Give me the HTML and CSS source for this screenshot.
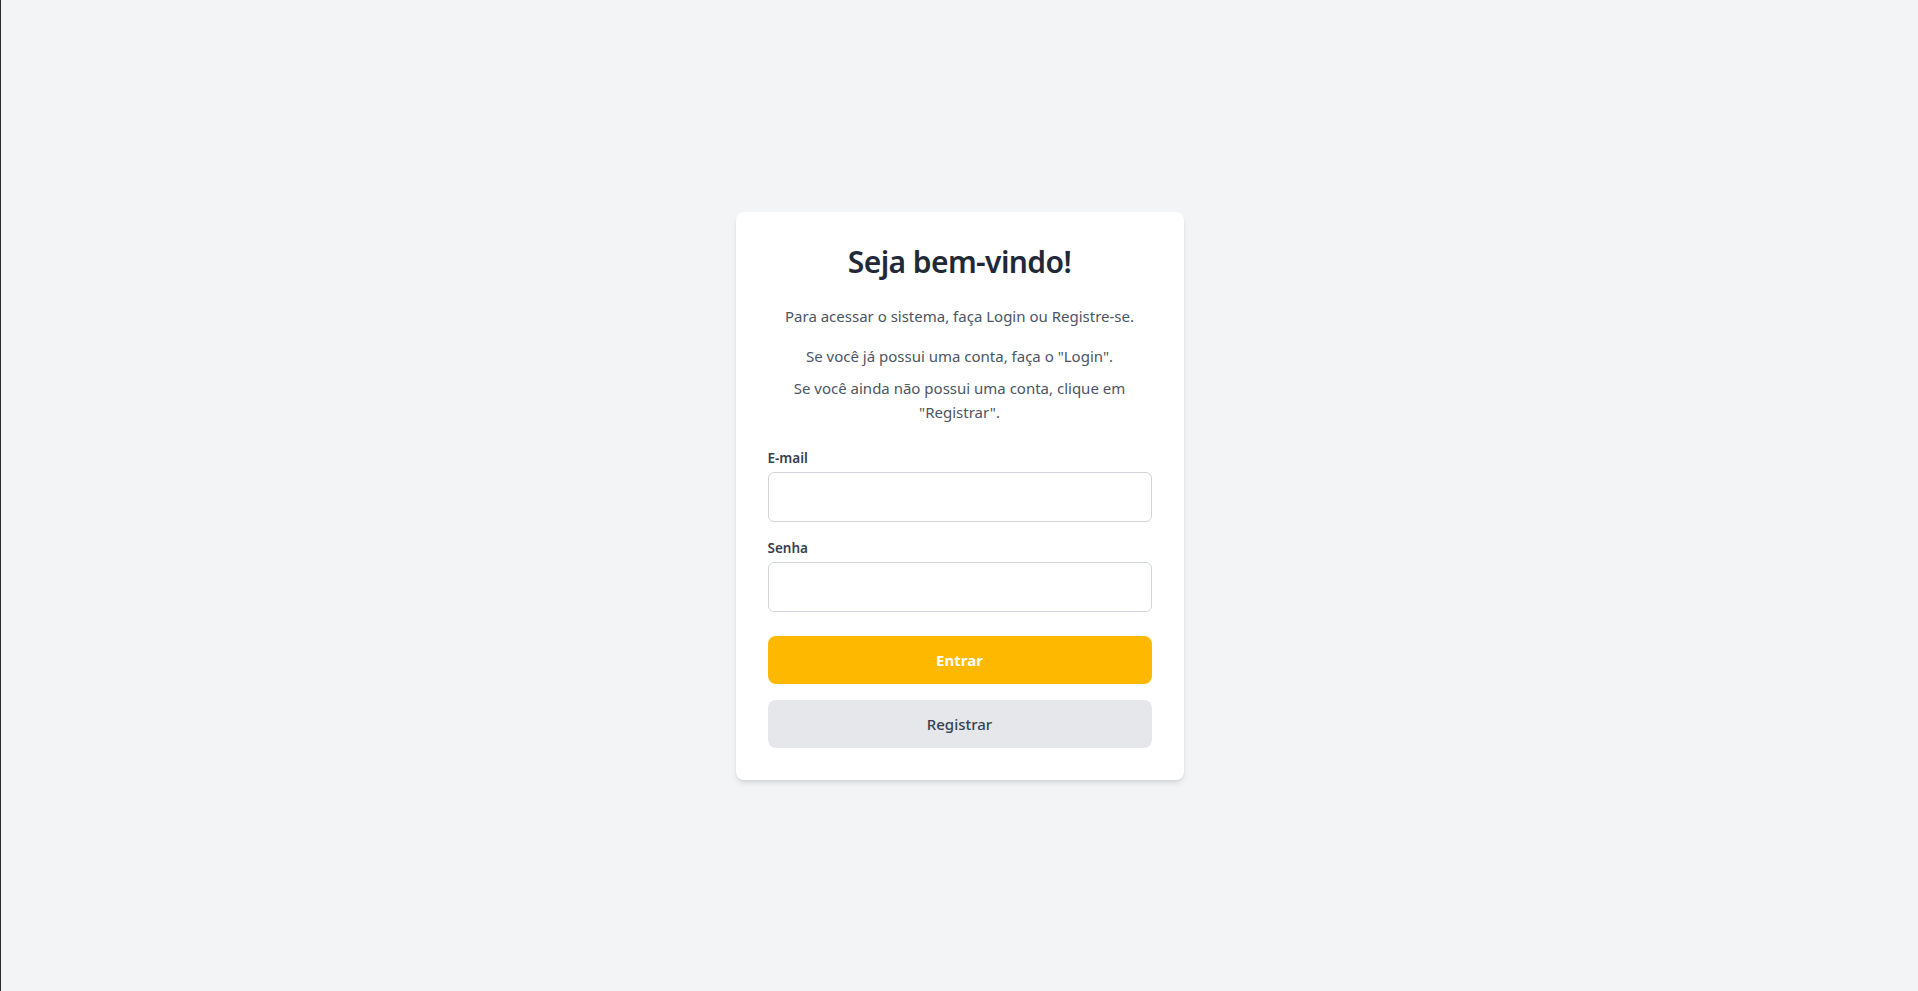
FILE: index.html
```html
<!DOCTYPE html>
<html lang="pt-BR">
<head>
<meta charset="utf-8">
<title>Login</title>
<link rel="stylesheet" href="styles.css">
</head>
<body>
<div class="page">
  <div class="card">
    <h1 class="title">Seja bem-vindo!</h1>
    <p class="intro intro-first">Para acessar o sistema, faça Login ou Registre-se.</p>
    <p class="intro intro-second">Se você já possui uma conta, faça o "Login".</p>
    <p class="intro intro-third">Se você ainda não possui uma conta, clique em "Registrar".</p>
    <form class="form" onsubmit="return false;">
      <div class="field">
        <label class="label" for="email">E-mail</label>
        <input class="input" id="email" type="email">
      </div>
      <div class="field">
        <label class="label" for="senha">Senha</label>
        <input class="input" id="senha" type="password">
      </div>
      <button class="btn btn-primary" type="submit">Entrar</button>
      <button class="btn btn-secondary" type="button">Registrar</button>
    </form>
  </div>
</div>
</body>
</html>
```

FILE: styles.css
```css
* { box-sizing: border-box; }
html, body { margin: 0; padding: 0; height: 100%; }
body {
  background: #f3f4f6;
  font-family: "Noto Sans", "Open Sans", "Liberation Sans", sans-serif;
  color: #1f2937;
}
.page {
  min-height: 100vh;
  border-left: 1px solid #2b2b2b;
  display: flex;
  align-items: center;
  justify-content: center;
}
.card {
  width: 448px;
  background: #ffffff;
  border-radius: 8px;
  padding: 32px;
  box-shadow: 0 4px 6px -1px rgba(0,0,0,0.1), 0 2px 4px -2px rgba(0,0,0,0.1);
}
.title {
  margin: 0 0 24px;
  font-size: 30px;
  line-height: 36px;
  font-weight: 600;
  text-align: center;
  color: #1f2937;
  letter-spacing: -0.6px;
}
.intro {
  margin: 0;
  font-size: 15px;
  line-height: 24px;
  text-align: center;
  color: #4b5563;
  letter-spacing: 0;
}
.intro-first { margin-bottom: 16px; }
.intro-second { margin-bottom: 8px; }
.intro-third { margin-bottom: 24px; }
.form { display: flex; flex-direction: column; }
.field { display: flex; flex-direction: column; margin-bottom: 16px; }
.label {
  font-size: 13.5px;
  line-height: 20px;
  font-weight: 600;
  color: #374151;
  margin-bottom: 4px;
}
.input {
  height: 50px;
  border: 1px solid #d1d5db;
  border-radius: 6px;
  padding: 12px 16px;
  font: inherit;
  font-size: 16px;
  background: #fff;
  outline: none;
}
.btn {
  height: 48px;
  border: none;
  border-radius: 8px;
  font-family: inherit;
  font-size: 15px;
  cursor: pointer;
}
.btn-primary {
  margin-top: 8px;
  background: #ffb800;
  color: #ffffff;
  font-weight: 700;
}
.btn-secondary {
  margin-top: 16px;
  background: #e5e7eb;
  color: #374151;
  font-weight: 500;
}
```
